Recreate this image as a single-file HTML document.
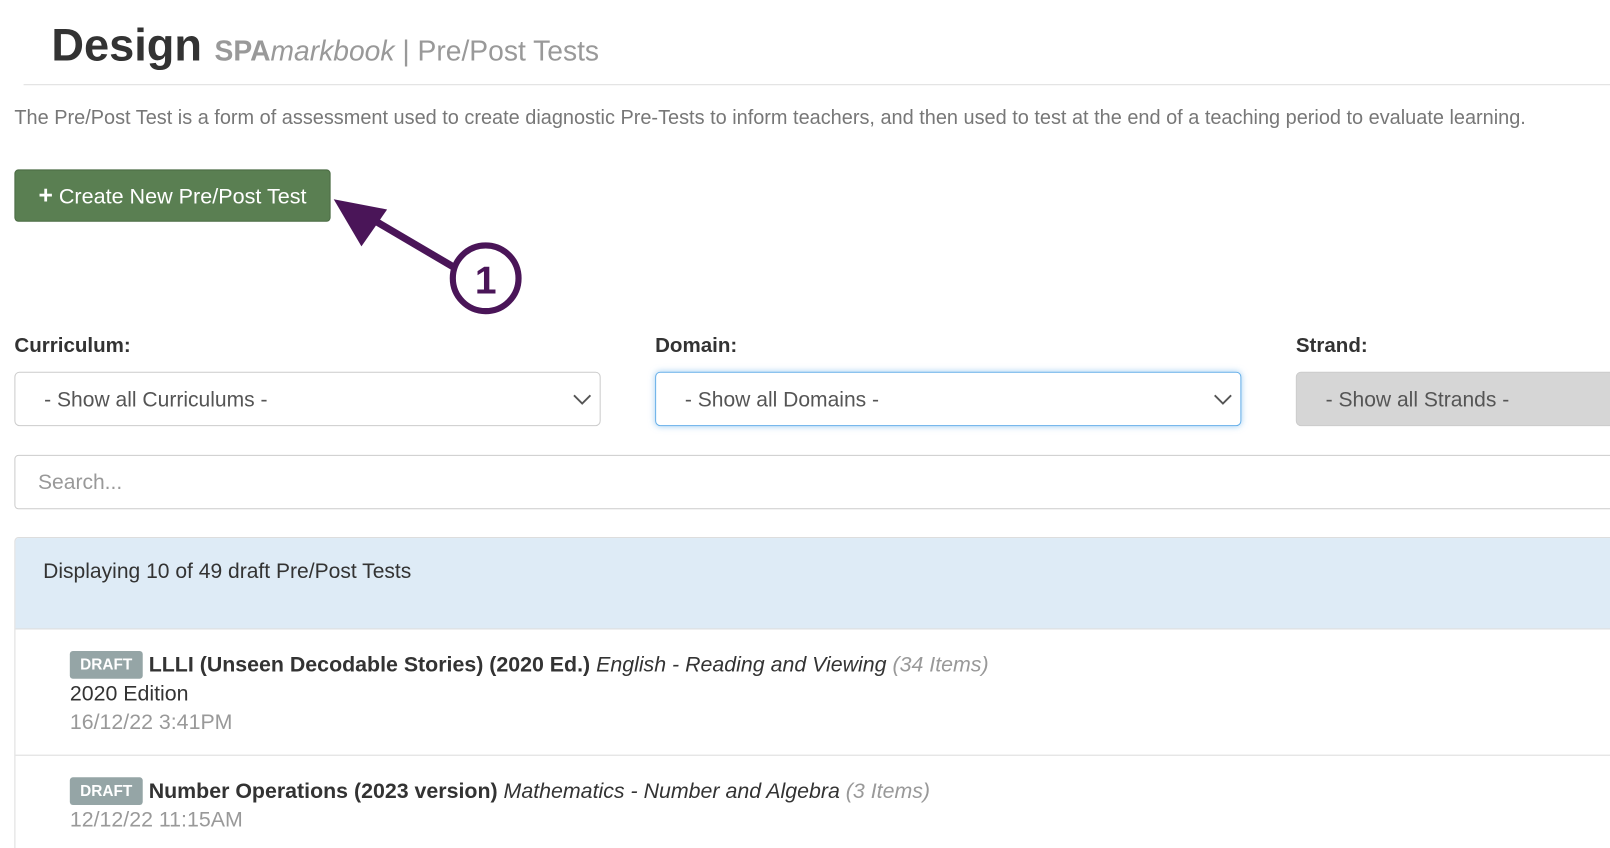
<!DOCTYPE html>
<html><head><meta charset="utf-8"><style>
html,body{margin:0;padding:0;background:#fff;overflow:hidden;width:1610px;height:848px}
#w{position:absolute;left:0;top:0;width:1568px;height:826px;overflow:hidden;transform:scale(1.0268);transform-origin:0 0;font-family:"Liberation Sans",sans-serif}
.a{position:absolute;white-space:nowrap}
.sel{position:absolute;top:362px;height:53px;border:1px solid #ccc;border-radius:5px;box-sizing:border-box;font-size:20.5px;color:#555;line-height:53px;padding-left:28px}
.lab{position:absolute;top:326px;font-size:20px;font-weight:bold;color:#333}
.badge{display:inline-block;background:#95a5a6;color:#fff;font-size:15px;font-weight:bold;padding:0 10px;height:27px;line-height:27px;border-radius:3px;vertical-align:2px;margin-right:6px}
</style></head><body><div id="w">
<div class="a" style="left:50px;top:20px;font-size:44px;font-weight:bold;color:#333">Design <span style="font-size:27.5px;color:#999;font-weight:bold">SPA<i style="font-weight:normal">markbook</i> <span style="font-weight:normal">| Pre/Post Tests</span></span></div>
<div class="a" style="left:23px;top:82px;width:1560px;height:1px;background:#ddd"></div>
<div class="a" style="left:14px;top:104px;font-size:19.4px;color:#777">The Pre/Post Test is a form of assessment used to create diagnostic Pre-Tests to inform teachers, and then used to test at the end of a teaching period to evaluate learning.</div>
<div class="a" style="left:14px;top:165px;width:308px;height:51px;box-sizing:border-box;background:#5a7f52;border:1px solid #4a6b43;border-radius:4px;color:#fff;font-size:21px;line-height:49px;text-align:center"><b style="font-size:24px">+</b> Create New Pre/Post Test</div>
<svg class="a" style="left:0;top:0" width="600" height="320"><line x1="445" y1="262" x2="360" y2="212" stroke="#4a1558" stroke-width="7"/><polygon points="325,194 377,204 352,240" fill="#4a1558"/><circle cx="473" cy="271" r="32" fill="#fff" stroke="#4a1558" stroke-width="6"/><text x="473" y="286" text-anchor="middle" font-family="Liberation Sans" font-weight="bold" font-size="38" fill="#4a1558">1</text></svg>
<div class="lab" style="left:14px">Curriculum:</div>
<div class="lab" style="left:638px">Domain:</div>
<div class="lab" style="left:1262px">Strand:</div>
<div class="sel" style="left:14px;width:571px">- Show all Curriculums -<svg style="position:absolute;right:8px;top:20px" width="18" height="12"><path d="M1 2 L9 10 L17 2" stroke="#555" stroke-width="1.8" fill="none"/></svg></div>
<div class="sel" style="left:638px;width:571px;border-color:#66afe9;box-shadow:0 0 6px rgba(102,175,233,.6)">- Show all Domains -<svg style="position:absolute;right:8px;top:20px" width="18" height="12"><path d="M1 2 L9 10 L17 2" stroke="#555" stroke-width="1.8" fill="none"/></svg></div>
<div class="sel" style="left:1262px;width:340px;background:#d6d6d6">- Show all Strands -</div>
<div class="a" style="left:14px;top:443px;width:1600px;height:53px;box-sizing:border-box;border:1px solid #ccc;border-radius:4px;font-size:20.5px;color:#999;line-height:51px;padding-left:22px">Search...</div>
<div class="a" style="left:14px;top:523px;width:1600px;height:340px;box-sizing:border-box;border:1px solid #ddd;border-radius:4px;overflow:hidden">
<div style="height:89px;background:#deebf6;border-bottom:1px solid #ddd;font-size:20.5px;color:#333;padding:21px 0 0 27px;box-sizing:border-box">Displaying 10 of 49 draft Pre/Post Tests</div>
<div style="height:123px;border-bottom:1px solid #ddd;padding:21px 0 0 53px;box-sizing:border-box;font-size:20.8px;color:#333;line-height:28px">
<div><span class="badge">DRAFT</span><b>LLLI (Unseen Decodable Stories) (2020 Ed.)</b> <i>English - Reading and Viewing</i> <i style="color:#999">(34 Items)</i></div>
<div>2020 Edition</div><div style="color:#999">16/12/22 3:41PM</div></div>
<div style="padding:21px 0 0 53px;font-size:20.8px;color:#333;line-height:28px">
<div><span class="badge">DRAFT</span><b>Number Operations (2023 version)</b> <i>Mathematics - Number and Algebra</i> <i style="color:#999">(3 Items)</i></div>
<div style="color:#999">12/12/22 11:15AM</div></div>
</div>
</div></body></html>
